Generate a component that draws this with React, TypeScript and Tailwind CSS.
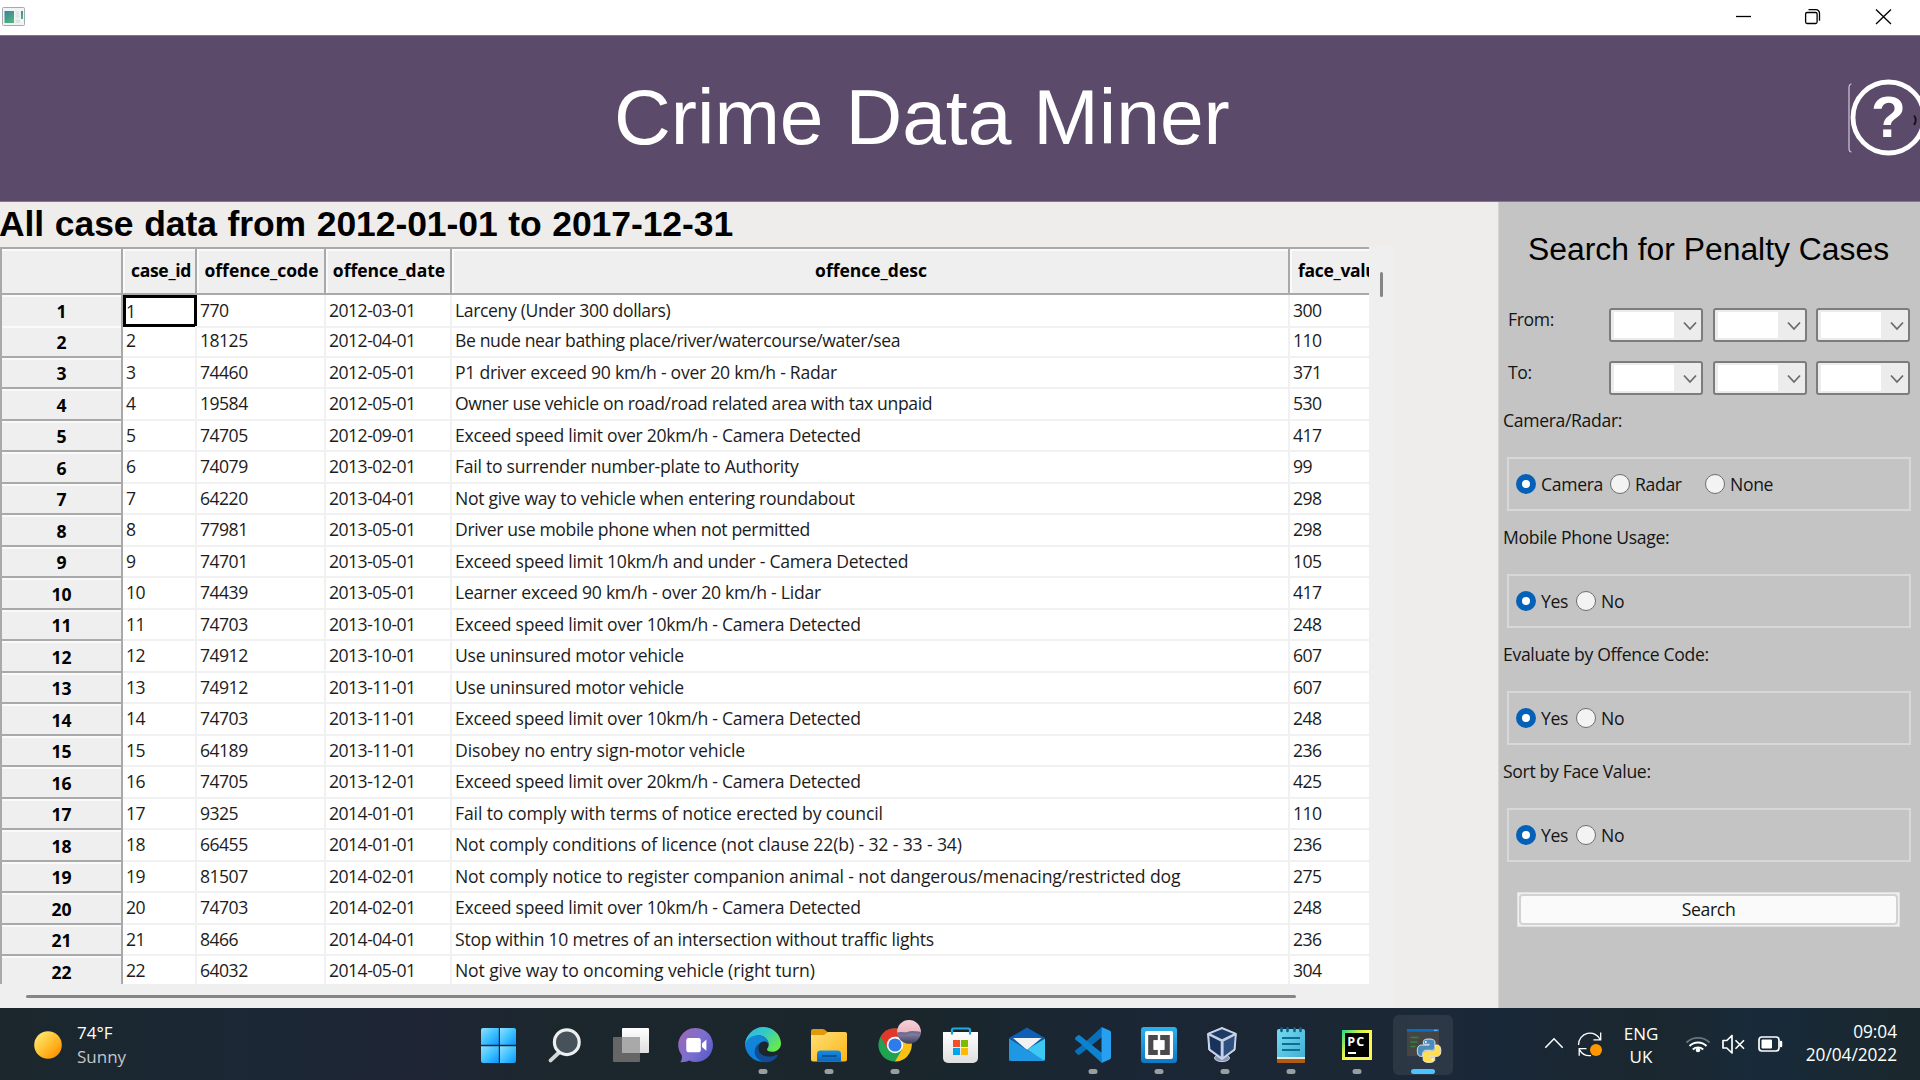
import { ReactNode } from "react";

type Row = { code: string; date: string; desc: string; value: string; fit?: "tight" | "loose" };

const rows: Row[] = [
  { code: "770", date: "2012-03-01", desc: "Larceny (Under 300 dollars)", value: "300", fit: "tight" },
  { code: "18125", date: "2012-04-01", desc: "Be nude near bathing place/river/watercourse/water/sea", value: "110", fit: "tight" },
  { code: "74460", date: "2012-05-01", desc: "P1 driver exceed 90 km/h - over 20 km/h - Radar", value: "371" },
  { code: "19584", date: "2012-05-01", desc: "Owner use vehicle on road/road related area with tax unpaid", value: "530", fit: "tight" },
  { code: "74705", date: "2012-09-01", desc: "Exceed speed limit over 20km/h - Camera Detected", value: "417" },
  { code: "74079", date: "2013-02-01", desc: "Fail to surrender number-plate to Authority", value: "99" },
  { code: "64220", date: "2013-04-01", desc: "Not give way to vehicle when entering roundabout", value: "298" },
  { code: "77981", date: "2013-05-01", desc: "Driver use mobile phone when not permitted", value: "298", fit: "tight" },
  { code: "74701", date: "2013-05-01", desc: "Exceed speed limit 10km/h and under - Camera Detected", value: "105" },
  { code: "74439", date: "2013-05-01", desc: "Learner exceed 90 km/h - over 20 km/h - Lidar", value: "417" },
  { code: "74703", date: "2013-10-01", desc: "Exceed speed limit over 10km/h - Camera Detected", value: "248" },
  { code: "74912", date: "2013-10-01", desc: "Use uninsured motor vehicle", value: "607" },
  { code: "74912", date: "2013-11-01", desc: "Use uninsured motor vehicle", value: "607" },
  { code: "74703", date: "2013-11-01", desc: "Exceed speed limit over 10km/h - Camera Detected", value: "248" },
  { code: "64189", date: "2013-11-01", desc: "Disobey no entry sign-motor vehicle", value: "236", fit: "loose" },
  { code: "74705", date: "2013-12-01", desc: "Exceed speed limit over 20km/h - Camera Detected", value: "425" },
  { code: "9325", date: "2014-01-01", desc: "Fail to comply with terms of notice erected by council", value: "110", fit: "loose" },
  { code: "66455", date: "2014-01-01", desc: "Not comply conditions of licence (not clause 22(b) - 32 - 33 - 34)", value: "236", fit: "loose" },
  { code: "81507", date: "2014-02-01", desc: "Not comply notice to register companion animal - not dangerous/menacing/restricted dog", value: "275", fit: "loose" },
  { code: "74703", date: "2014-02-01", desc: "Exceed speed limit over 10km/h - Camera Detected", value: "248" },
  { code: "8466", date: "2014-04-01", desc: "Stop within 10 metres of an intersection without traffic lights", value: "236" },
  { code: "64032", date: "2014-05-01", desc: "Not give way to oncoming vehicle (right turn)", value: "304", fit: "loose" },
];

const tracking = {
  tight: "tracking-[-0.37px]",
  normal: "tracking-[-0.27px]",
  loose: "tracking-[-0.13px]",
};

const gridCols = "grid grid-cols-[123px_74px_129px_126px_838px_120px]";

function HeadCell({ children, start }: { children?: ReactNode; start?: boolean }) {
  return (
    <div
      className={
        "flex items-center overflow-hidden whitespace-nowrap border-b-2 border-r-2 border-[#a9a9a9] bg-[#efefef] pb-[2px] text-[17.5px] font-bold text-black shadow-[inset_2px_2px_0_#fafafa] " +
        (start ? "justify-start pl-[8px] tracking-[-0.3px]" : "justify-center pl-[2px]")
      }
    >
      {children}
    </div>
  );
}

function Cell({ children, track = "tracking-[-0.52px]" }: { children: ReactNode; track?: string }) {
  return (
    <div
      className={
        "flex items-center overflow-hidden whitespace-nowrap border-b-2 border-r-2 border-[#f1f1f1] pb-px pl-[3px] text-[17.6px] text-[#1c1c1c] " +
        track
      }
    >
      {children}
    </div>
  );
}

function Table() {
  return (
    <div className="flex flex-1">
      <div className="flex w-[1393px] flex-col bg-[#efefef]">
        <div className="flex h-[737px]">
          <div className="w-[1369px] overflow-hidden border-l-2 border-t-2 border-[#a9a9a9] bg-white">
            <div className={gridCols + " -ml-0.5 h-[45.5px]"}>
              <HeadCell />
              <HeadCell start>case_id</HeadCell>
              <HeadCell>offence_code</HeadCell>
              <HeadCell>offence_date</HeadCell>
              <HeadCell>offence_desc</HeadCell>
              <HeadCell start>face_value</HeadCell>
            </div>
            {rows.map((r, i) => (
              <div key={i} className={gridCols + " -ml-0.5 h-[31.5px]"}>
                <div className="flex items-center justify-center border-b-2 border-r-2 border-[#a9a9a9] bg-[#efefef] pl-[2px] pt-[2px] text-[17.6px] font-bold text-black shadow-[inset_2px_2px_0_#fafafa]">
                  {i + 1}
                </div>
                {i === 0 ? (
                  <div className="mb-px flex items-center border-[3px] border-black text-[17.6px] text-[#1c1c1c]">1</div>
                ) : (
                  <Cell>{i + 1}</Cell>
                )}
                <Cell>{r.code}</Cell>
                <Cell>{r.date}</Cell>
                <Cell track={tracking[r.fit ?? "normal"]}>{r.desc}</Cell>
                <Cell>{r.value}</Cell>
              </div>
            ))}
          </div>
          <div className="flex flex-1 justify-center pt-[25px]">
            <div className="h-[25px] w-[3px] rounded-full bg-[#858585]" />
          </div>
        </div>
        <div className="flex flex-1 pl-[26px] pt-[11px]">
          <div className="h-[3px] w-[1270px] rounded-full bg-[#858585]" />
        </div>
      </div>
    </div>
  );
}

function Combo() {
  return (
    <div className="flex h-[34px] w-[94px] items-center rounded-[3px] border-2 border-[#7c7c7c] bg-[#ececec] pl-[3px]">
      <div className="h-[26px] w-[60px] bg-white" />
      <svg className="ml-[8px] mt-0.5 h-[14px] w-[16px]" viewBox="0 0 16 14" fill="none" stroke="#6b6b6b" strokeWidth="1.8">
        <path d="M2 3.5 L8 10 L14 3.5" />
      </svg>
    </div>
  );
}

function DateRow({ label }: { label: string }) {
  return (
    <div className="flex h-[34px]">
      <div className="w-[102px] pl-[1px] leading-[23px]">{label}</div>
      <div className="flex gap-[9.7px]">
        <Combo />
        <Combo />
        <Combo />
      </div>
    </div>
  );
}

function Radio({ label, on, width }: { label: string; on?: boolean; width: string }) {
  return (
    <div className={"flex items-center gap-[5px] " + width}>
      {on ? (
        <span className="h-5 w-5 shrink-0 rounded-full border-[6px] border-[#0560b8] bg-white" />
      ) : (
        <span className="h-5 w-5 shrink-0 rounded-full border-[1.5px] border-[#6e6e6e] bg-[#f3f3f3]" />
      )}
      <span>{label}</span>
    </div>
  );
}

function Group({ title, children }: { title: string; children: ReactNode }) {
  return (
    <div className="h-[117px]">
      <div className="h-[49px] pl-[4px] leading-[24px]">{title}</div>
      <div className="ml-2 flex h-[54px] w-[404px] items-center border-2 border-[#d8d8d8] pl-[7px] pt-[2px]">{children}</div>
    </div>
  );
}

function YesNo() {
  return (
    <>
      <Radio label="Yes" on width="w-[60px]" />
      <Radio label="No" width="w-[70px]" />
    </>
  );
}

function SearchPanel() {
  return (
    <div className="flex w-[422px] flex-col border-l border-[#d4d4d4] bg-[#c4c4c4] text-[17.6px] tracking-[-0.34px] text-[#141414]">
      <div className="h-[106px] whitespace-nowrap pl-[29px] pt-[25px] font-['Liberation_Sans',sans-serif] text-[31.85px] leading-[44px] tracking-normal text-black">
        Search for Penalty Cases
      </div>
      <div className="flex flex-col gap-[18.5px] pl-[8px]">
        <DateRow label="From:" />
        <DateRow label="To:" />
      </div>
      <div className="pt-[13px]">
        <Group title="Camera/Radar:">
          <Radio label="Camera" on width="w-[94px]" />
          <Radio label="Radar" width="w-[95px]" />
          <Radio label="None" width="w-[90px]" />
        </Group>
        <Group title="Mobile Phone Usage:">
          <YesNo />
        </Group>
        <Group title="Evaluate by Offence Code:">
          <YesNo />
        </Group>
        <Group title="Sort by Face Value:">
          <YesNo />
        </Group>
      </div>
      <div className="ml-[18px] mt-[16px] h-[35px] w-[383px] border border-[#e2e2e2] bg-[#efefef] p-px">
        <div className="flex h-full items-center justify-center rounded-[4px] border-2 border-[#d2d2d2] bg-[#fafafa]">Search</div>
      </div>
    </div>
  );
}

/* Gradients shared by the taskbar icons. */
function Defs() {
  return (
    <svg className="absolute h-0 w-0">
      <defs>
        <linearGradient id="win" x1="0" y1="0" x2="1" y2="1">
          <stop offset="0" stopColor="#8fe0ff" />
          <stop offset="0.5" stopColor="#3fc3ff" />
          <stop offset="1" stopColor="#0a94ff" />
        </linearGradient>
        <linearGradient id="sun" x1="0.1" y1="0.1" x2="0.9" y2="0.9">
          <stop offset="0" stopColor="#ffe770" />
          <stop offset="0.5" stopColor="#ffc030" />
          <stop offset="1" stopColor="#ff8f00" />
        </linearGradient>
        <linearGradient id="chat" x1="0" y1="0.2" x2="1" y2="0.9">
          <stop offset="0" stopColor="#9b68b8" />
          <stop offset="0.5" stopColor="#7b6fd0" />
          <stop offset="1" stopColor="#5558c8" />
        </linearGradient>
        <linearGradient id="edgeTop" x1="0" y1="0" x2="1" y2="0.6">
          <stop offset="0" stopColor="#2fb4e8" />
          <stop offset="0.5" stopColor="#35c9c8" />
          <stop offset="1" stopColor="#66e84e" />
        </linearGradient>
        <linearGradient id="edgeLeft" x1="0" y1="0" x2="0.5" y2="1">
          <stop offset="0" stopColor="#1787d6" />
          <stop offset="1" stopColor="#0a7fe0" />
        </linearGradient>
        <linearGradient id="folder" x1="0" y1="0" x2="1" y2="1">
          <stop offset="0" stopColor="#ffdf78" />
          <stop offset="1" stopColor="#fbb616" />
        </linearGradient>
        <linearGradient id="folderBlue" x1="0" y1="0" x2="0" y2="1">
          <stop offset="0" stopColor="#168de0" />
          <stop offset="1" stopColor="#0a66bd" />
        </linearGradient>
        <linearGradient id="avatar" x1="0" y1="0" x2="0" y2="1">
          <stop offset="0" stopColor="#f6d3da" />
          <stop offset="0.5" stopColor="#efb8bf" />
          <stop offset="0.55" stopColor="#8b86a8" />
          <stop offset="1" stopColor="#3d3f5f" />
        </linearGradient>
        <linearGradient id="white" x1="0" y1="0" x2="0" y2="1">
          <stop offset="0" stopColor="#ffffff" />
          <stop offset="1" stopColor="#dedede" />
        </linearGradient>
        <linearGradient id="note" x1="0" y1="0" x2="1" y2="1">
          <stop offset="0" stopColor="#76dbf2" />
          <stop offset="1" stopColor="#41b0d3" />
        </linearGradient>
        <linearGradient id="brk" x1="0" y1="0" x2="0" y2="1">
          <stop offset="0" stopColor="#2bb2ea" />
          <stop offset="1" stopColor="#0f78c4" />
        </linearGradient>
        <linearGradient id="pyc" x1="0" y1="0" x2="1" y2="0.8">
          <stop offset="0" stopColor="#21d789" />
          <stop offset="0.4" stopColor="#d8f24a" />
          <stop offset="0.6" stopColor="#fcf84a" />
          <stop offset="1" stopColor="#fcf84a" />
        </linearGradient>
      </defs>
    </svg>
  );
}

/* Each icon is drawn in a 66x72 slot. */
const icons: { name: string; art: ReactNode; mark?: "dot" | "active" }[] = [
  {
    name: "start",
    art: (
      <g fill="url(#win)">
        <path d="M17 20h15.8v16.8H15V22a2 2 0 0 1 2-2z" />
        <path d="M34 20h14a2 2 0 0 1 2 2v14.8H34z" />
        <path d="M15 38.2h17.8V55H17a2 2 0 0 1-2-2z" />
        <path d="M34 38.2h16V53a2 2 0 0 1-2 2H34z" />
      </g>
    ),
  },
  {
    name: "search",
    art: (
      <g>
        <path d="M27 44.5 L18.6 52.4" stroke="#d3d6d9" strokeWidth="4" strokeLinecap="round" />
        <circle cx="34.8" cy="34.2" r="12.4" fill="#46515a" stroke="#eceeef" strokeWidth="3.2" />
      </g>
    ),
  },
  {
    name: "task view",
    art: (
      <g>
        <rect x="15" y="29" width="27" height="25" rx="1" fill="#666666" />
        <rect x="24" y="20" width="27" height="25" rx="1" fill="url(#white)" />
        <rect x="24" y="29" width="18" height="16" fill="#a9a9a9" />
      </g>
    ),
  },
  {
    name: "chat",
    art: (
      <g>
        <path d="M32 20a17 17 0 1 1-7 32.5c-2 1.2-4.5 1.8-8.6 1.7 1.4-2.2 1.8-4 1.4-6.7A17 17 0 0 1 32 20z" fill="url(#chat)" />
        <rect x="22.3" y="30" width="14.5" height="14.2" rx="2.2" fill="#fff" />
        <path d="M38 35.4 L42.4 31.6 V42.8 L38 39z" fill="#fff" />
      </g>
    ),
  },
  {
    name: "edge",
    mark: "dot",
    art: (
      <g>
        <path d="M15 38a18 18 0 0 1 34-8c-9-8-28-6-34 8z" fill="#2bb7dd" />
        <path d="M33 19c10 0 18 7.5 18 16.5 0 5-4 8.3-9 8.3-3.5 0-5-1.3-5-2.5 0-.8 1.7-1.7 1.7-4.8 0-5-4.5-9-10-9-6.5 0-11.5 3.8-13.7 8.5C16 27 23.5 19 33 19z" fill="url(#edgeTop)" />
        <path d="M15 37c1-6 7-10 13.2-9.8C34 27.5 38.5 31 38.7 36c-1-1.8-3-2.8-5-2.6-4 .3-6 4-5.5 8 .8 6 6 10.5 11.8 11A18 18 0 0 1 15 37z" fill="url(#edgeLeft)" />
        <path d="M29.5 35c-5.5 3.5-6.5 11-2 15.5 5 5 13.5 5.5 19.2-1.3 1.5-1.7 1.2-3-.5-2.2-9 3.8-17.2 0-18-5.5-.3-2.5.2-4.9 1.3-6.5z" fill="#114d97" />
      </g>
    ),
  },
  {
    name: "explorer",
    mark: "dot",
    art: (
      <g>
        <path d="M15 23a2 2 0 0 1 2-2h9.5c1.5 0 2.5.8 3.5 1.8l2 1.7h17a2 2 0 0 1 2 2V34H15z" fill="#e09a07" />
        <path d="M15 27h13l4-3h17a2 2 0 0 1 2 2v25.500a2 2 0 0 1-2 2H17a2 2 0 0 1-2-2z" fill="url(#folder)" />
        <path d="M21 53.5V46a3.5 3.5 0 0 1 3.5-3.5h17A3.5 3.5 0 0 1 45 46v7.500z" fill="url(#folderBlue)" />
        <path d="M26 48h14.500" stroke="#0b4f91" strokeWidth="1.8" />
      </g>
    ),
  },
  {
    name: "chrome",
    mark: "dot",
    art: (
      <g>
        <circle cx="33" cy="37" r="16.6" fill="#1fa353" />
        <path d="M33 37 L18.6 28.7 A16.6 16.6 0 0 1 47.4 28.7 z" fill="#e0392b" />
        <path d="M33 28.7 H47.4 A16.6 16.6 0 0 1 33 53.6 L40.2 41.2z" fill="#fcc015" />
        <path d="M18.6 28.7 L25.8 41.2 L33 37 L30 28.7z" fill="#e0392b" />
        <circle cx="33" cy="37" r="8.2" fill="#fff" />
        <circle cx="33" cy="37" r="6.6" fill="#2f7bea" />
        <circle cx="47" cy="23.8" r="11.9" fill="url(#avatar)" />
        <path d="M36 26c4-2 6 1 10-1s8 0 12.5 0" stroke="#6f6d95" strokeWidth="2.5" fill="none" />
      </g>
    ),
  },
  {
    name: "store",
    art: (
      <g>
        <path d="M24 26.5V22a1.5 1.5 0 0 1 1.5-1.5h15A1.5 1.5 0 0 1 42 22v4.5" fill="none" stroke="#25a9e0" strokeWidth="2.2" />
        <path d="M15 24h35v26a5 5 0 0 1-5 5H20a5 5 0 0 1-5-5z" fill="url(#white)" />
        <path d="M24 24v2.5M42 24v2.5" stroke="#1d9ad6" strokeWidth="2.2" />
        <rect x="25" y="32" width="7" height="7" fill="#f25022" />
        <rect x="33" y="32" width="7" height="7" fill="#7fba00" />
        <rect x="25" y="40" width="7" height="7" fill="#00a4ef" />
        <rect x="33" y="40" width="7" height="7" fill="#ffb900" />
      </g>
    ),
  },
  {
    name: "mail",
    art: (
      <g>
        <path d="M15 30 L33 19.4 L51 30 L33 42z" fill="#0e5fb5" />
        <path d="M19 30h28.5L33 42z" fill="#f2f2f2" />
        <path d="M15 30.5 L33 41.8 L15 53z" fill="#1878c8" />
        <path d="M51 30.5V51a2 2 0 0 1-2 2L33 41.6z" fill="#3cc8f2" />
        <path d="M15 30.5 L51 53H17a2 2 0 0 1-2-2z" fill="#1f97e2" />
      </g>
    ),
  },
  {
    name: "code",
    mark: "dot",
    art: (
      <g>
        <path d="M41.5 19.2 L21 38 l-5.5 4.3 a1.5 1.5 0 0 0 0 2.2 l2.2 2 a1.7 1.7 0 0 0 2.2 0 L42 29z" fill="#0a6fb8" />
        <path d="M41.5 54.8 L21 36 l-5.5-4.3 a1.5 1.5 0 0 1 0-2.2 l2.2-2 a1.7 1.7 0 0 1 2.2 0 L42 45z" fill="#0d83d0" />
        <path d="M41.5 19 L49.5 22.6 a2.2 2.2 0 0 1 1.5 2 V49.4 a2.2 2.2 0 0 1-1.5 2 L41.5 55z" fill="#27a0f2" />
      </g>
    ),
  },
  {
    name: "brackets",
    mark: "dot",
    art: (
      <g>
        <rect x="15" y="19" width="36" height="36" rx="3" fill="url(#brk)" />
        <rect x="19" y="23" width="28" height="28" rx="2" fill="#fff" />
        <path d="M22.2 27h9.6v5.2h-4.2v9.600h4.2v5.2h-9.600zM43.8 27h-9.6v5.2h4.2v9.6h-4.2v5.2h9.6z" fill="#4a4a4a" />
        <rect x="27.6" y="32.2" width="10.8" height="9.6" fill="#fff" />
      </g>
    ),
  },
  {
    name: "virtualbox",
    mark: "dot",
    art: (
      <g strokeLinejoin="round" transform="translate(-3 0)">
        <ellipse cx="33" cy="50" rx="7.5" ry="3.6" fill="#8b96b5" stroke="#c8cfe2" strokeWidth="1" />
        <path d="M33 19.5 L47.3 25.5 L46 42 L33 51.5 L19.8 42 L18.6 25.5z" fill="#c4cfe4" stroke="#d6deee" strokeWidth="1" />
        <path d="M33 21.3 L44.2 25.8 L33 31.3 L21.8 25.8z" fill="#1c3a63" />
        <path d="M20.3 27.8 L31.7 33.6 V48.4 L21.4 41z" fill="#17335c" />
        <path d="M45.7 27.8 L34.6 33.6 V48.4 L44.6 41z" fill="#2e4f80" />
      </g>
    ),
  },
  {
    name: "notepad",
    mark: "dot",
    art: (
      <g>
        <rect x="19" y="48" width="28" height="7" rx="1" fill="#b25a12" />
        <rect x="19" y="45" width="28" height="6" fill="#e8e4df" />
        <path d="M19 23a2 2 0 0 1 2-2h24a2 2 0 0 1 2 2v26H19z" fill="url(#note)" />
        <path d="M24 30h18M24 36h18M24 42h18" stroke="#0b6f93" strokeWidth="1.9" />
        <path d="M23.5 20.3v2.6M29.5 20.3v2.6M36.5 20.3v2.6M42.5 20.3v2.6" stroke="#0d6283" strokeWidth="2.6" strokeLinecap="round" />
      </g>
    ),
  },
  {
    name: "pycharm",
    mark: "dot",
    art: (
      <g>
        <rect x="18" y="22" width="30" height="30" fill="url(#pyc)" />
        <rect x="21" y="25" width="24" height="24" fill="#000" />
        <text x="23.3" y="37.5" fontSize="12.5" fontWeight="700" fill="#fff" fontFamily="Open Sans" textLength="17">
          PC
        </text>
        <rect x="24" y="44" width="8" height="2" fill="#fff" />
      </g>
    ),
  },
  {
    name: "python",
    mark: "active",
    art: (
      <g>
        <rect x="17" y="21" width="32" height="27" fill="#454545" />
        <rect x="17" y="21" width="32" height="2.6" fill="#0a6fc4" />
        <path d="M44 22.3h3.5" stroke="#8cc3f0" strokeWidth="1" />
        <path d="M20.5 29.5h8M20.5 34h7M20.5 38.5h5" stroke="#2f8b2c" strokeWidth="1.4" />
        <g transform="translate(27.3 31) scale(0.98)">
          <path
            fill="#4b8bbe"
            stroke="#dfe6ec"
            strokeWidth="1"
            d="M11.9 0C5.8 0 6.2 2.6 6.2 2.6V5.4h5.9v.8H3.9S0 5.8 0 11.9s3.4 5.8 3.4 5.8h2.1v-2.8s-.1-3.4 3.4-3.4h5.8s3.3.1 3.3-3.2V3.2S18.5 0 11.9 0z"
          />
          <path
            fill="#ffdf4f"
            stroke="#f0ecd8"
            strokeWidth="1"
            d="M12.1 23.9c6.1 0 5.7-2.6 5.7-2.6v-2.8h-5.9v-.8h8.2S24 18.2 24 12.1s-3.4-5.9-3.4-5.9h-2.1V9s.1 3.4-3.4 3.4H9.3S6 12.3 6 15.6v5.3s-.5 3 6.1 3z"
          />
          <circle cx="8.7" cy="3" r="1" fill="#fff" />
          <circle cx="15.4" cy="20.9" r="1" fill="#fff" />
        </g>
      </g>
    ),
  },
];

function Taskbar() {
  return (
    <div className="flex h-[72px] bg-[linear-gradient(90deg,#1b272c_0%,#1b2835_12%,#1f2535_22%,#1b272c_30%,#1a262c_48%,#1b2636_60%,#1c2734_70%,#192838_78%,#1b272e_86%,#182a3a_92%,#1a272b_100%)] text-[17px] text-white">
      <Defs />
      <div className="flex w-[466px] items-center pl-[34px]">
        <svg className="mt-[2px] h-[28px] w-[28px]" viewBox="0 0 28 28">
          <circle cx="14" cy="14" r="13.8" fill="url(#sun)" />
        </svg>
        <div className="pl-[15px] pt-[2px] leading-[24px]">
          <div>74°F</div>
          <div className="text-[#c3c6c9]">Sunny</div>
        </div>
      </div>
      <div className="flex">
        {icons.map((it) => (
          <svg key={it.name} className="h-[72px] w-[66px]" viewBox="0 0 66 72">
            {it.mark === "active" && <rect x="3" y="7" width="60" height="60" rx="6" fill="#ffffff" fillOpacity="0.08" />}
            {it.art}
            {it.mark === "dot" && <rect x="28.5" y="61" width="9" height="5" rx="2.5" fill="#9b9ea1" />}
            {it.mark === "active" && <rect x="21" y="61" width="24" height="5" rx="2.5" fill="#4cc2ff" />}
          </svg>
        ))}
      </div>
      <div className="flex flex-1 justify-end pr-[23px]">
        <svg className="h-[72px] w-[70px]" viewBox="1540 0 70 72" fill="none" stroke="#fff">
          <path d="M1545.3 39.8 L1554 30.8 L1562.7 39.8" strokeWidth="1.5" />
          <path d="M1578.5 37 a11.5 11.5 0 0 1 22-5 M1600.7 24.5 V31.8 H1593.4" strokeWidth="1.3" />
          <path d="M1591 47.6 a11.5 11.5 0 0 1 -11.5-6 M1579.2 47.8 V40.6 H1586.5" strokeWidth="1.3" />
          <circle cx="1596" cy="42" r="6" fill="#ff9800" stroke="none" />
        </svg>
        <div className="flex w-[62px] flex-col items-center justify-center pt-px leading-[23px]">
          <div>ENG</div>
          <div>UK</div>
        </div>
        <svg className="ml-[8px] h-[72px] w-[110px]" viewBox="1680 0 110 72" fill="none" stroke="#fff">
          <path d="M1686.5 34.5 a16.5 16.5 0 0 1 23 0" stroke="#69757e" strokeWidth="1.8" />
          <path d="M1689.5 38 a12 12 0 0 1 17 0" strokeWidth="1.9" />
          <path d="M1692.8 41.5 a7.4 7.4 0 0 1 10.4 0" strokeWidth="1.9" />
          <circle cx="1698" cy="42" r="2.3" fill="#fff" stroke="none" />
          <path d="M1723 32.5 h3.8 l5.2-5 v17.5 l-5.2-5 h-3.800z" strokeWidth="1.7" strokeLinejoin="round" />
          <path d="M1735.5 32.2 l8.5 8.5 M1744 32.2 l-8.5 8.5" strokeWidth="1.6" />
          <rect x="1759" y="29" width="20" height="14" rx="3" strokeWidth="1.7" />
          <rect x="1761.5" y="31.5" width="10.5" height="9" rx="1" fill="#fff" stroke="none" />
          <path d="M1781 34v4" strokeWidth="2.5" strokeLinecap="round" />
        </svg>
        <div className="flex w-[107px] flex-col items-end justify-center pb-[2px] text-[17.3px] tracking-[-0.05px] leading-[23px]">
          <div>09:04</div>
          <div>20/04/2022</div>
        </div>
      </div>
    </div>
  );
}

function TitleBar() {
  return (
    <div className="flex h-[35px] items-start justify-between bg-white">
      <svg className="ml-0.5 mt-[7px] h-[19px] w-[23px]" viewBox="0 0 23 19">
        <defs>
          <linearGradient id="app" x1="0" y1="0" x2="0.6" y2="1">
            <stop offset="0" stopColor="#3d7fa0" />
            <stop offset="1" stopColor="#4fb37c" />
          </linearGradient>
        </defs>
        <rect x="0.5" y="0.5" width="22" height="18" rx="1" fill="#f1f3f4" stroke="#a3abb1" />
        <rect x="2.5" y="4" width="9.5" height="12" fill="url(#app)" />
        <rect x="13.5" y="4" width="4" height="7" fill="#e3e6e8" />
        <rect x="19" y="4" width="2" height="8" fill="url(#app)" />
        <rect x="13.5" y="12.5" width="4.5" height="3.5" fill="#dfe2e4" />
      </svg>
      <svg className="h-[34px] w-[200px]" viewBox="1720 0 200 34" fill="none" stroke="#000" strokeWidth="1.3">
        <path d="M1736 16.5h15" />
        <rect x="1805.6" y="12.5" width="11.5" height="11" rx="1.5" />
        <path d="M1808.5 9.7h7.5a3.5 3.5 0 0 1 3.5 3.5v7.5" />
        <path d="M1876 9.5 L1891 24 M1891 9.5 L1876 24" />
      </svg>
    </div>
  );
}

export default function App() {
  return (
    <div className="flex h-[1080px] w-[1920px] flex-col overflow-hidden bg-[#eeedeb] font-['Open_Sans','Noto_Sans',sans-serif]">
      <TitleBar />
      <div className="flex h-[167px] items-center justify-between border-y border-[#84739a] bg-[#5c4a6a] pb-[3px]">
        <h1 className="whitespace-nowrap pl-[614px] font-['Liberation_Sans',sans-serif] text-[78.6px] leading-[80px] text-white">
          Crime Data Miner
        </h1>
        <svg className="h-[90px] w-[80px]" viewBox="1840 72 80 90">
          <path d="M1851.5 84 q-2.5 0 -2.5 4 v60 q0 4 2.5 4" fill="none" stroke="#cfc8d6" strokeWidth="1.2" />
          <circle cx="1888.5" cy="117.5" r="35.5" fill="none" stroke="#fff" strokeWidth="4.8" />
          <text x="1888.5" y="137.3" textAnchor="middle" fontFamily="Liberation Sans" fontWeight="700" fontSize="57" fill="#fff">
            ?
          </text>
          <path d="M1914 115.5 q3.5 4.5 0 9.5" fill="none" stroke="#15101a" strokeWidth="1.8" />
        </svg>
      </div>
      <div className="flex flex-1">
        <div className="flex flex-1 flex-col">
          <h2 className="-ml-px h-[45px] whitespace-nowrap font-['Liberation_Sans',sans-serif] text-[35.5px] font-bold leading-[44px] tracking-[-0.08px] text-black [word-spacing:0.9px]">
            All case data from 2012-01-01 to 2017-12-31
          </h2>
          <Table />
        </div>
        <SearchPanel />
      </div>
      <Taskbar />
    </div>
  );
}
